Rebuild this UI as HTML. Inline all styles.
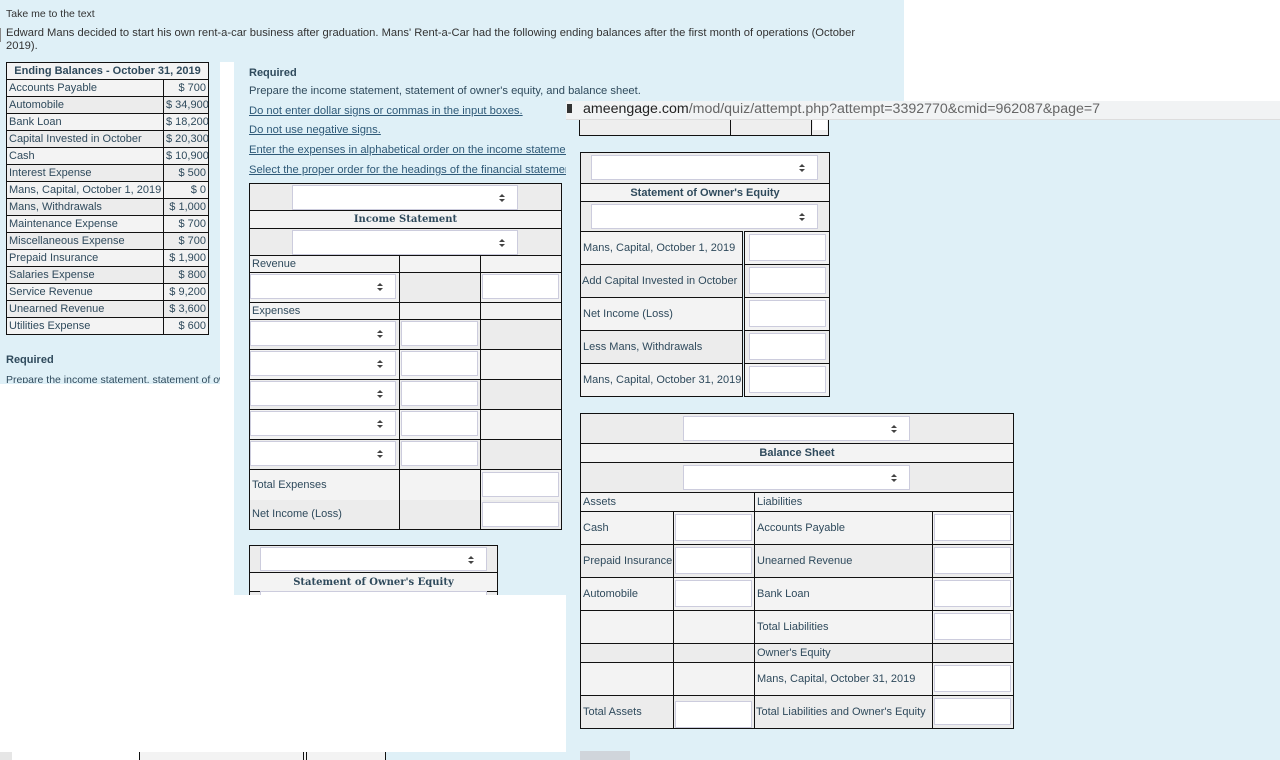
<!DOCTYPE html>
<html><head><meta charset="utf-8">
<style>
*{margin:0;padding:0;box-sizing:border-box}
body{width:1280px;height:760px;position:relative;overflow:hidden;background:#dff0f7;font-family:"Liberation Sans",Arial,sans-serif;font-size:11px;color:#2f4a5c}
.a{position:absolute}
table{border-collapse:collapse;position:absolute;table-layout:fixed}
td{border:1px solid #111;padding:0 2px;font-size:11px;color:#2f4a5c;white-space:nowrap;overflow:hidden;vertical-align:middle}
.g1{background:#f3f3f3}.g2{background:#ececec}
.sel{position:absolute;background:#fff;border:1px solid #ccd;height:25px}
.sel:after{content:"";position:absolute;right:12px;top:8px;border:3px solid transparent;border-bottom:3px solid #444;border-top:0}
.sel:before{content:"";position:absolute;right:12px;top:13px;border:3px solid transparent;border-top:3px solid #444;border-bottom:0}
.inp{position:absolute;background:#fff;border:1px solid #ccd}
.lnk{text-decoration:underline;color:#2f5a78}
.bt{font-weight:bold;text-align:center;color:#2f4a5c}
</style></head><body>

<div class="a" style="left:904px;top:0;width:376px;height:102px;background:#fff"></div>
<div class="a" style="left:0;top:28px;width:1px;height:14px;background:#888"></div>
<div class="a" style="left:6px;top:8px;font-size:10.5px;color:#333">Take me to the text</div>
<div class="a" style="left:6px;top:27px;font-size:11.2px;line-height:13px;width:880px;color:#333">Edward Mans decided to start his own rent-a-car business after graduation. Mans' Rent-a-Car had the following ending balances after the first month of operations (October 2019).</div>

<table style="left:6px;top:62px;width:202px">
<col style="width:157px"><col style="width:45px">
<tr style="height:17px" class="g1"><td colspan="2" class="bt" style="font-size:11px">Ending Balances - October 31, 2019</td></tr>
<tr style="height:17px" class="g1"><td>Accounts Payable</td><td style="text-align:right">$ 700</td></tr>
<tr style="height:17px" class="g2"><td>Automobile</td><td style="text-align:right">$ 34,900</td></tr>
<tr style="height:17px" class="g1"><td>Bank Loan</td><td style="text-align:right">$ 18,200</td></tr>
<tr style="height:17px" class="g2"><td>Capital Invested in October</td><td style="text-align:right">$ 20,300</td></tr>
<tr style="height:17px" class="g1"><td>Cash</td><td style="text-align:right">$ 10,900</td></tr>
<tr style="height:17px" class="g2"><td>Interest Expense</td><td style="text-align:right">$ 500</td></tr>
<tr style="height:17px" class="g1"><td>Mans, Capital, October 1, 2019</td><td style="text-align:right">$ 0</td></tr>
<tr style="height:17px" class="g2"><td>Mans, Withdrawals</td><td style="text-align:right">$ 1,000</td></tr>
<tr style="height:17px" class="g1"><td>Maintenance Expense</td><td style="text-align:right">$ 700</td></tr>
<tr style="height:17px" class="g2"><td>Miscellaneous Expense</td><td style="text-align:right">$ 700</td></tr>
<tr style="height:17px" class="g1"><td>Prepaid Insurance</td><td style="text-align:right">$ 1,900</td></tr>
<tr style="height:17px" class="g2"><td>Salaries Expense</td><td style="text-align:right">$ 800</td></tr>
<tr style="height:17px" class="g1"><td>Service Revenue</td><td style="text-align:right">$ 9,200</td></tr>
<tr style="height:17px" class="g2"><td>Unearned Revenue</td><td style="text-align:right">$ 3,600</td></tr>
<tr style="height:17px" class="g1"><td>Utilities Expense</td><td style="text-align:right">$ 600</td></tr>
</table>
<div class="a" style="left:6px;top:354px;font-weight:bold">Required</div>
<div class="a" style="left:6px;top:374px;height:9px;overflow:hidden;font-size:10.5px;width:214px;white-space:nowrap">Prepare the income statement, statement of owner's equity</div>
<div class="a" style="left:0;top:384px;width:234px;height:376px;background:#fff"></div>
<div class="a" style="left:220px;top:62px;width:14px;height:533px;background:#fff"></div>

<div class="a" style="left:249px;top:67px;font-weight:bold">Required</div>
<div class="a" style="left:249px;top:85px;font-size:11.2px">Prepare the income statement, statement of owner's equity, and balance sheet.</div>
<div class="a lnk" style="left:249px;top:105px;font-size:11.2px">Do not enter dollar signs or commas in the input boxes.</div>
<div class="a lnk" style="left:249px;top:124px;font-size:11.2px">Do not use negative signs.</div>
<div class="a lnk" style="left:249px;top:144px;font-size:11.2px;width:317px;overflow:hidden;white-space:nowrap">Enter the expenses in alphabetical order on the income statement.</div>
<div class="a lnk" style="left:249px;top:164px;font-size:11.2px;width:317px;overflow:hidden;white-space:nowrap">Select the proper order for the headings of the financial statements.</div>

<div class="a" style="left:249px;top:182px;width:313px;height:348px;overflow:hidden">
<table style="left:0;top:1px;width:312px">
<col style="width:150px"><col style="width:81px"><col style="width:81px">
<tr style="height:27px" class="g2"><td colspan="3"></td></tr>
<tr style="height:18px" class="g1"><td colspan="3" class="bt" style="font-family:'DejaVu Serif',serif;font-size:10px">Income Statement</td></tr>
<tr style="height:27px" class="g2"><td colspan="3"></td></tr>
<tr style="height:17px" class="g1"><td>Revenue</td><td></td><td></td></tr>
<tr style="height:30px" class="g1"><td></td><td class="g2"></td><td></td></tr>
<tr style="height:17px" class="g1"><td>Expenses</td><td></td><td></td></tr>
<tr style="height:30px" class="g2"><td></td><td></td><td></td></tr>
<tr style="height:30px" class="g1"><td></td><td></td><td></td></tr>
<tr style="height:30px" class="g2"><td></td><td></td><td></td></tr>
<tr style="height:30px" class="g1"><td></td><td></td><td></td></tr>
<tr style="height:30px" class="g2"><td></td><td></td><td></td></tr>
<tr style="height:30px" class="g1"><td style="border-bottom:0">Total Expenses</td><td style="border-bottom:0"></td><td style="border-bottom:0"></td></tr>
<tr style="height:30px" class="g2"><td style="border-top:0">Net Income (Loss)</td><td style="border-top:0"></td><td style="border-top:0"></td></tr>
</table>
<div class="sel" style="left:43px;top:3px;width:226px"></div>
<div class="sel" style="left:43px;top:48px;width:226px"></div>
<div class="sel" style="left:1px;top:92px;width:146px"></div>
<div class="inp" style="left:233px;top:92px;width:77px;height:25px"></div>
<div class="sel" style="left:1px;top:139px;width:146px"></div><div class="inp" style="left:152px;top:139px;width:77px;height:25px"></div>
<div class="sel" style="left:1px;top:169px;width:146px"></div><div class="inp" style="left:152px;top:169px;width:77px;height:25px"></div>
<div class="sel" style="left:1px;top:199px;width:146px"></div><div class="inp" style="left:152px;top:199px;width:77px;height:25px"></div>
<div class="sel" style="left:1px;top:229px;width:146px"></div><div class="inp" style="left:152px;top:229px;width:77px;height:25px"></div>
<div class="sel" style="left:1px;top:259px;width:146px"></div><div class="inp" style="left:152px;top:259px;width:77px;height:25px"></div>
<div class="inp" style="left:233px;top:290px;width:77px;height:25px"></div>
<div class="inp" style="left:233px;top:320px;width:77px;height:25px"></div>
</div>

<div class="a" style="left:249px;top:545px;width:250px;height:50px;overflow:hidden">
<table style="left:0;top:0;width:249px">
<tr style="height:27px" class="g2"><td></td></tr>
<tr style="height:19px" class="g1"><td class="bt" style="font-family:'DejaVu Serif',serif;font-size:10px">Statement of Owner's Equity</td></tr>
<tr style="height:27px" class="g2"><td></td></tr>
</table>
<div class="sel" style="left:11px;top:2px;width:227px;height:24px"></div>
<div class="sel" style="left:11px;top:46px;width:227px;height:24px"></div>
</div>

<div class="a" style="left:0;top:595px;width:566px;height:157px;background:#fff"></div>
<div class="a" style="left:0;top:752px;width:12px;height:8px;background:#e6e6e6"></div>
<div class="a" style="left:12px;top:752px;width:111px;height:8px;background:#fff"></div>
<div class="a" style="left:139px;top:752px;width:247px;height:8px;background:#f3f3f3;border-left:1px solid #111;border-right:1px solid #111"></div>
<div class="a" style="left:303px;top:752px;width:4px;height:8px;border-left:1px solid #111;border-right:1px solid #111"></div>

<div class="a" style="left:566px;top:101px;width:714px;height:19px;background:#f1f3f4;border-bottom:1px solid #ddd"></div>
<div class="a" style="left:567px;top:104px;width:5px;height:9px;background:#333"></div>
<div class="a" style="left:583px;top:101px;font-size:14.2px;color:#222">ameengage.com<span style="color:#666">/mod/quiz/attempt.php?attempt=3392770&amp;cmid=962087&amp;page=7</span></div>
<div class="a" style="left:579px;top:120px;width:250px;height:16px;background:#eeeeee;border:1px solid #111;border-top:0"></div>
<div class="a" style="left:730px;top:120px;width:1px;height:15px;background:#111"></div>
<div class="a" style="left:811px;top:120px;width:1px;height:15px;background:#111"></div>
<div class="a" style="left:813px;top:120px;width:14px;height:10px;background:#fff"></div>

<div class="a" style="left:580px;top:152px;width:249px;height:245px">
<table style="left:0;top:0;width:249px">
<col style="width:163px"><col style="width:86px">
<tr style="height:31px" class="g2"><td colspan="2"></td></tr>
<tr style="height:18px" class="g1"><td colspan="2" class="bt">Statement of Owner's Equity</td></tr>
<tr style="height:30px" class="g2"><td colspan="2"></td></tr>
<tr style="height:33px" class="g1"><td style="border-right:3px double #111">Mans, Capital, October 1, 2019</td><td></td></tr>
<tr style="height:33px" class="g2"><td style="border-right:3px double #111;padding:0 1px">Add Capital Invested in October</td><td></td></tr>
<tr style="height:33px" class="g1"><td style="border-right:3px double #111">Net Income (Loss)</td><td></td></tr>
<tr style="height:33px" class="g2"><td style="border-right:3px double #111">Less Mans, Withdrawals</td><td></td></tr>
<tr style="height:33px" class="g1"><td style="border-right:3px double #111">Mans, Capital, October 31, 2019</td><td></td></tr>
</table>
<div class="sel" style="left:11px;top:3px;width:227px"></div>
<div class="sel" style="left:11px;top:52px;width:227px"></div>
<div class="inp" style="left:169px;top:82px;width:77px;height:27px"></div>
<div class="inp" style="left:169px;top:115px;width:77px;height:27px"></div>
<div class="inp" style="left:169px;top:148px;width:77px;height:27px"></div>
<div class="inp" style="left:169px;top:181px;width:77px;height:27px"></div>
<div class="inp" style="left:169px;top:214px;width:77px;height:27px"></div>
</div>

<div class="a" style="left:580px;top:413px;width:433px;height:316px">
<table style="left:0;top:0;width:433px">
<col style="width:93px"><col style="width:81px"><col style="width:178px"><col style="width:81px">
<tr style="height:30px" class="g2"><td colspan="4"></td></tr>
<tr style="height:19px" class="g1"><td colspan="4" class="bt">Balance Sheet</td></tr>
<tr style="height:30px" class="g2"><td colspan="4"></td></tr>
<tr style="height:19px" class="g1"><td colspan="2">Assets</td><td colspan="2">Liabilities</td></tr>
<tr style="height:33px" class="g1"><td>Cash</td><td></td><td>Accounts Payable</td><td></td></tr>
<tr style="height:33px" class="g2"><td>Prepaid Insurance</td><td></td><td>Unearned Revenue</td><td></td></tr>
<tr style="height:33px" class="g1"><td>Automobile</td><td></td><td>Bank Loan</td><td></td></tr>
<tr style="height:33px" class="g1"><td></td><td></td><td>Total Liabilities</td><td></td></tr>
<tr style="height:19px" class="g2"><td></td><td></td><td>Owner's Equity</td><td></td></tr>
<tr style="height:33px" class="g1"><td></td><td></td><td>Mans, Capital, October 31, 2019</td><td></td></tr>
<tr style="height:33px" class="g2"><td>Total Assets</td><td></td><td style="padding:0 1px">Total Liabilities and Owner's Equity</td><td></td></tr>
</table>
<div class="sel" style="left:103px;top:3px;width:227px"></div>
<div class="sel" style="left:103px;top:52px;width:227px"></div>
<div class="inp" style="left:95px;top:101px;width:77px;height:27px"></div>
<div class="inp" style="left:95px;top:134px;width:77px;height:27px"></div>
<div class="inp" style="left:95px;top:167px;width:77px;height:27px"></div>
<div class="inp" style="left:95px;top:288px;width:77px;height:27px"></div>
<div class="inp" style="left:354px;top:101px;width:77px;height:27px"></div>
<div class="inp" style="left:354px;top:134px;width:77px;height:27px"></div>
<div class="inp" style="left:354px;top:167px;width:77px;height:27px"></div>
<div class="inp" style="left:354px;top:200px;width:77px;height:27px"></div>
<div class="inp" style="left:354px;top:252px;width:77px;height:27px"></div>
<div class="inp" style="left:354px;top:285px;width:77px;height:27px"></div>
</div>
<div class="a" style="left:580px;top:751px;width:50px;height:9px;background:#d0d5db"></div>
</body></html>
